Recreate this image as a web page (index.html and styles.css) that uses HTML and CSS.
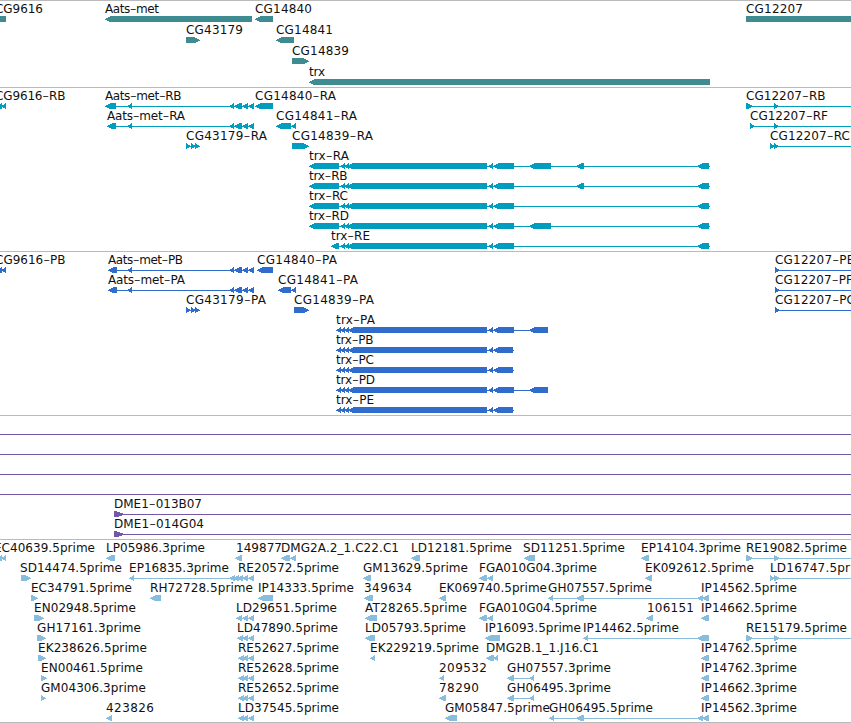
FILE: index.html
```
<!DOCTYPE html>
<html lang="en">
<head>
<meta charset="utf-8">
<title>Genome tracks</title>
<link rel="stylesheet" href="styles.css">
</head>
<body>
<main class="tracks">
  <section class="track track-gene" id="gene"></section>
  <section class="track track-transcript" id="transcript"></section>
  <section class="track track-protein" id="protein"></section>
  <section class="track track-clone" id="clone"></section>
  <section class="track track-est" id="est"></section>
</main>
<script src="app.js"></script>
</body>
</html>
```
FILE: styles.css
```
body {
  margin: 0;
  background: #fff;
  overflow: hidden;
}
.tracks {
  display: flex;
  flex-direction: column;
  width: 851px;
  height: 722px;
  border-bottom: 1px solid #bababa;
}
.track {
  display: flex;
  flex-direction: column;
  border-top: 1px solid #bababa;
  padding-bottom: 3px;
}
.row {
  display: block;
  width: 851px;
  height: 20px;
  overflow: visible;
  fill: currentColor;
}
.label {
  font: 12px "DejaVu Sans", sans-serif;
  fill: #111;
}
.dash {
  font-family: "DejaVu Sans Light", "DejaVu Sans", sans-serif;
  font-weight: 200;
  font-size: 19px;
}
.track-gene { color: #3e8c92; padding-bottom: 2px; }
.track-gene .row { height: 21px; }
.track-transcript { color: #009dbf; }
.track-protein { color: #306ccb; }
.track-clone { color: #7557a8; }
.track-est { color: #89bddd; padding-bottom: 2px; }
```
FILE: app.js
```
// Feature: [label, label start, label end, direction, blocks, line start, line end]
const END = 870;
const aats = (x) => [[x, x === 105 || x === 107 ? 116 : 117], [127, 132], [229, 234], [234, 242], [242, 248], [248, 254]];
const trx = (x, ...extra) => [[x, 339], [340, 345], [344, 349], [347, 487], [488, 493], [493, 514], ...extra, [697, 709]];
const trp = (end, ...extra) => [[336, 341], [340, 345], [344, 349], [348, 487], [488, 493], [493, end], ...extra];
const triple = (x) => [[x, x + 6], [242, 248], [248, 254]];
const tiny = [[186, 191], [191, 196], [195, 200]];

const tracks = {
  gene: [
    [["CG9616", -5, 43, "L", [[-30, 6]]], ["Aats-met", 105, 159, "L", [[105, 252]]],
     ["CG14840", 255, 312, "L", [[255, 273]]], ["CG12207", 746, 803, "R", [[746, END]]]],
    [["CG43179", 186, 243, "R", [[186, 200]]], ["CG14841", 276, 333, "L", [[276, 294]]]],
    [["CG14839", 292, 349, "R", [[292, 309]]]],
    [["trx", 309, 325, "L", [[309, 710]]]],
  ],
  transcript: [
    [["CG9616-RB", -5, 65.5, "L", [[-4, 2], [1, 6]]], ["Aats-met-RB", 105, 181.5, "L", aats(105)],
     ["CG14840-RA", 255, 336, "L", [[255, 273]]], ["CG12207-RB", 746, 825.5, "R", [[746, 753], [774, 779]], 746, END]],
    [["Aats-met-RA", 107, 185, "L", aats(107)], ["CG14841-RA", 276, 357, "L", [[276, 291], [291, 296]]],
     ["CG12207-RF", 750, 828, "R", [[750, 755], [774, 779]], 750, END]],
    [["CG43179-RA", 186, 267, "R", tiny], ["CG14839-RA", 292, 373, "R", [[292, 309]]],
     ["CG12207-RC", 770, 850, "R", [[770, 775], [774, 779]], 770, END]],
    [["trx-RA", 309, 349, "L", trx(309, [529, 551], [576, 584]), 309, 710]],
    [["trx-RB", 309, 347.5, "L", trx(309, [576, 584]), 309, 710]],
    [["trx-RC", 309, 348, "L", trx(309), 309, 710]],
    [["trx-RD", 309, 349, "L", trx(309, [529, 551]), 309, 710]],
    [["trx-RE", 331, 370, "L", trx(331), 331, 710]],
  ],
  protein: [
    [["CG9616-PB", -5, 65.5, "L", [[-4, 2], [1, 6]]], ["Aats-met-PB", 108, 183, "L", aats(108)],
     ["CG14840-PA", 257, 337, "L", [[257, 273]]], ["CG12207-PB", 775, 855, "R", [[775, 780]], 775, END]],
    [["Aats-met-PA", 108, 185, "L", aats(108)], ["CG14841-PA", 278, 358, "L", [[278, 291], [291, 296]]],
     ["CG12207-PF", 775, 853, "R", [[775, 780]], 775, END]],
    [["CG43179-PA", 186, 266, "R", tiny], ["CG14839-PA", 294, 374, "R", [[294, 309]]],
     ["CG12207-PC", 775, 855, "R", [[775, 780]], 775, END]],
    [["trx-PA", 336, 375, "L", trp(514, [529, 548])]],
    [["trx-PB", 336, 373.5, "L", trp(513), 336, 514]],
    [["trx-PC", 336, 374, "L", trp(513), 336, 514]],
    [["trx-PD", 336, 375, "L", trp(514, [529, 548])]],
    [["trx-PE", 336, 374, "L", trp(513), 336, 514]],
  ],
  clone: [
    [["", 0, 0, "R", [], 0, END]], [["", 0, 0, "R", [], 0, END]],
    [["", 0, 0, "R", [], 0, END]], [["", 0, 0, "R", [], 0, END]],
    [["DME1-013B07", 114, 202, "R", [[114, 125]], 114, END]],
    [["DME1-014G04", 114, 204, "R", [[114, 125]], 114, END]],
  ],
  est: [
    [["EC40639.5prime", -6, 95, "L", [[-4, 2], [1, 6]]], ["LP05986.3prime", 106, 205, "L", [[106, 115]]],
     ["149877", 236, 282, "L", [[235, 242]]], ["DMG2A.2_1.C22.C1", 281, 399, "L", [[281, 290], [290, 296]]],
     ["LD12181.5prime", 411, 512, "L", [[411, 420]]], ["SD11251.5prime", 523, 625, "L", [[524, 535]]],
     ["EP14104.3prime", 641, 741, "L", [[641, 649]]], ["RE19082.5prime", 746, 847, "R", [[746, 753], [774, 780]], 746, END]],
    [["SD14474.5prime", 20, 122, "R", [[21, 31]]],
     ["EP16835.3prime", 129, 229, "L", [[129, 134], [229, 235], [233, 239]]],
     ["RE20572.5prime", 238, 339, "L", triple(237)], ["GM13629.5prime", 363, 468, "L", [[363, 371]]],
     ["FGA010G04.3prime", 479, 597, "L", [[479, 487], [487, 493]]], ["EK092612.5prime", 645, 754, "L", [[645, 652]]],
     ["LD16747.5prime", 770, 873, "R", [[770, 775], [774, 780]], 770, END]],
    [["EC34791.5prime", 31, 132, "R", [[31, 38]]], ["RH72728.5prime", 150, 253, "L", [[150, 161]]],
     ["IP14333.5prime", 258, 354, "L", [[258, 273]]], ["349634", 364, 412, "L", [[364, 373]]],
     ["EK069740.5prime", 439, 547, "L", [[439, 446]]],
     ["GH07557.5prime", 548, 652, "L", [[548, 553], [576, 584], [697, 703], [702, 709]]],
     ["IP14562.5prime", 701, 797, "L", []]],
    [["EN02948.5prime", 34, 136, "R", [[34, 44]]], ["LD29651.5prime", 236, 337, "L", triple(236)],
     ["AT28265.5prime", 365, 467, "L", [[365, 377]]], ["FGA010G04.5prime", 479, 597, "L", [[479, 487], [487, 493]]],
     ["106151", 647, 694, "L", [[646, 653]]], ["IP14662.5prime", 701, 797, "L", [[701, 709]]]],
    [["GH17161.3prime", 37, 141, "R", [[37, 46]]], ["LD47890.5prime", 237, 338, "L", triple(237)],
     ["LD05793.5prime", 365, 466, "L", [[365, 375]]], ["IP16093.5prime", 485, 581, "L", [[485, 500]]],
     ["IP14462.5prime", 583, 679, "L", [[583, 588], [697, 709]]],
     ["RE15179.5prime", 746, 847, "R", [[746, 753], [774, 780]], 746, END]],
    [["EK238626.5prime", 38, 147, "R", [[38, 46]]], ["RE52627.5prime", 238, 339, "L", triple(238)],
     ["EK229219.5prime", 370, 479, "L", [[370, 375]]], ["DMG2B.1_1.J16.C1", 486, 599, "L", [[486, 494], [493, 498]]],
     ["IP14762.5prime", 701, 797, "L", [[701, 709]]]],
    [["EN00461.5prime", 41, 143, "R", [[41, 47]]], ["RE52628.5prime", 238, 339, "L", triple(238)],
     ["209532", 439, 487, "L", [[439, 444]]], ["GH07557.3prime", 507, 611, "L", [[507, 514], [529, 534]]],
     ["IP14762.3prime", 701, 797, "L", [[701, 709]]]],
    [["GM04306.3prime", 41, 146, "R", [[41, 46]]], ["RE52652.5prime", 238, 339, "L", triple(238)],
     ["78290", 439, 479, "L", [[439, 446]]], ["GH06495.3prime", 507, 611, "L", [[507, 514], [529, 534]]],
     ["IP14662.3prime", 701, 797, "L", [[701, 709]]]],
    [["423826", 106, 154, "L", [[106, 112]]], ["LD37545.5prime", 238, 339, "L", triple(238)],
     ["GM05847.5prime", 445, 550, "L", [[445, 457]]],
     ["GH06495.5prime", 549, 653, "L", [[549, 554], [576, 584], [697, 703], [702, 709]]],
     ["IP14562.3prime", 701, 797, "L", []]],
  ],
};

// Inset of the arrow head on each of the six pixel rows of a block.
const HEAD = [5, 3, 1, 0, 2, 4];

function block([a, b], dir) {
  const size = b - a;
  const scale = size === 11 && dir === "R" ? 1.5 : 1;
  const tip = HEAD.map((inset, i) => {
    const depth = Math.min(Math.round(inset * scale), size - 1);
    const x = dir === "L" ? a + depth : b - depth;
    return `L${x} ${15 + i}L${x} ${16 + i}`;
  }).join("");
  const back = dir === "L" ? b : a;
  return `<path shape-rendering="crispEdges" d="M${back} 15${tip}L${back} 21Z"/>`;
}

function feature([label, x, end, dir, blocks, from, to]) {
  let out = "";
  if (from === undefined && blocks.length > 1) {
    from = blocks[0][0];
    to = blocks[blocks.length - 1][1];
  }
  if (from !== undefined) out += `<rect x="${from}" y="18" width="${to - from}" height="1"/>`;
  out += blocks.map((b) => block(b, dir)).join("");
  if (label) {
    const text = label.replace(/-(.)/g, '<tspan class="dash" dy="2">-</tspan><tspan dy="-2">$1</tspan>');
    out += `<text class="label" x="${x}" y="12" textLength="${end - x}">${text}</text>`;
  }
  return out;
}

for (const [id, rows] of Object.entries(tracks)) {
  document.getElementById(id).innerHTML = rows
    .map((row) => `<svg class="row">${row.map(feature).join("")}</svg>`)
    .join("");
}
```
